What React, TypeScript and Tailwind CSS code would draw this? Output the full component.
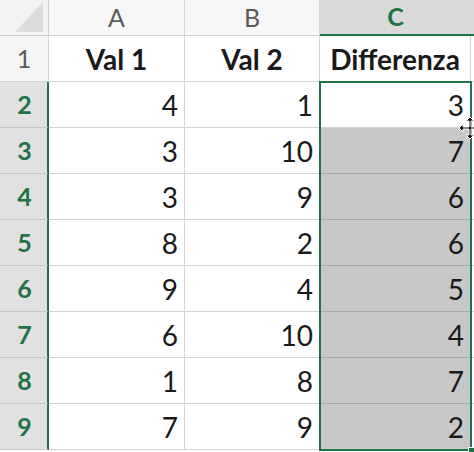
import React from "react";

const rows = [
  { n: 2, a: 4, b: 1, c: 3 },
  { n: 3, a: 3, b: 10, c: 7 },
  { n: 4, a: 3, b: 9, c: 6 },
  { n: 5, a: 8, b: 2, c: 6 },
  { n: 6, a: 9, b: 4, c: 5 },
  { n: 7, a: 6, b: 10, c: 4 },
  { n: 8, a: 1, b: 8, c: 7 },
  { n: 9, a: 7, b: 9, c: 2 },
];

const font = { fontFamily: "Lato, 'Open Sans', sans-serif" };

function MoveCursor() {
  return (
    <svg width="24" height="24" viewBox="0 0 24 24" className="absolute left-[458px] top-[116px]">
      <path
        d="M12 1 L16 5 L13 5 L13 11 L19 11 L19 8 L23 12 L19 16 L19 13 L13 13 L13 19 L16 19 L12 23 L8 19 L11 19 L11 13 L5 13 L5 16 L1 12 L5 8 L5 11 L11 11 L11 5 L8 5 Z"
        fill="#111"
        stroke="#fff"
        strokeWidth="1"
      />
    </svg>
  );
}

export default function App() {
  return (
    <div className="relative w-[474px] h-[452px] overflow-hidden bg-white text-[28px] text-[#1a1a1a]" style={font}>
      {/* column headers */}
      <div className="flex h-[36px]">
        <div className="relative w-[49px] shrink-0 bg-[#f3f3f3] border-r border-b border-[#cfcfcf]">
          <div className="absolute right-[5px] bottom-[3px] w-0 h-0 border-l-[28px] border-l-transparent border-b-[30px] border-b-[#dcdcdc]" />
        </div>
        <div className="w-[136px] shrink-0 bg-[#f7f7f7] border-r border-b border-[#d4d4d4] flex items-center justify-center text-[25px] text-[#5a5a5a]">A</div>
        <div className="w-[135px] shrink-0 bg-[#f7f7f7] border-r border-b border-[#d4d4d4] flex items-center justify-center text-[25px] text-[#5a5a5a]">B</div>
        <div className="w-[154px] shrink-0 bg-[#dadada] border-b-2 border-[#217346] flex items-center justify-center text-[25px] font-bold text-[#217346] pr-[3px]">C</div>
      </div>

      {/* header row */}
      <div className="flex h-[46px]">
        <div className="w-[49px] shrink-0 bg-[#f5f5f5] border-r border-b border-[#d4d4d4] flex items-center justify-center text-[25px] text-[#5a5a5a]">1</div>
        <div className="w-[136px] shrink-0 border-r border-b border-[#d4d4d4] flex items-center justify-center font-bold">Val 1</div>
        <div className="w-[135px] shrink-0 border-r border-b border-[#d4d4d4] flex items-center justify-center font-bold">Val 2</div>
        <div className="w-[151px] shrink-0 border-r border-b border-[#d4d4d4] flex items-center justify-center font-bold">Differenza</div>
        <div className="w-[3px] shrink-0 border-b border-[#d4d4d4]" />
      </div>

      {/* data rows */}
      {rows.map((r, i) => (
        <div key={r.n} className="flex h-[46px]">
          <div className="w-[49px] shrink-0 bg-[#e1e1e1] border-r-2 border-r-[#217346] border-b border-b-[#c6c6c6] flex items-center justify-center text-[25px] font-bold text-[#217346] pl-[2px]">
            {r.n}
          </div>
          <div className="w-[136px] shrink-0 border-r border-b border-[#d4d4d4] flex items-center justify-end pr-[6px]">{r.a}</div>
          <div className="w-[135px] shrink-0 border-r border-b border-[#d4d4d4] flex items-center justify-end pr-[6px]">{r.b}</div>
          <div
            className={
              i === 0
                ? "w-[151px] shrink-0 bg-white border-b border-[#d4d4d4] flex items-center justify-end pr-[7px]"
                : "w-[151px] shrink-0 bg-[#c8c8c8] border-b border-[#a9a9a9] flex items-center justify-end pr-[7px]"
            }
          >
            {r.c}
          </div>
          <div className="w-[3px] shrink-0 border-b border-[#d4d4d4]" />
        </div>
      ))}

      {/* selection border C2:C9 */}
      <div className="absolute left-[319px] top-[81px] w-[153px] h-[370px] border-2 border-[#217346] pointer-events-none" />
      <div className="absolute left-[468px] top-[447px] w-[7px] h-[7px] bg-[#217346] border border-white" />
      <MoveCursor />
    </div>
  );
}
